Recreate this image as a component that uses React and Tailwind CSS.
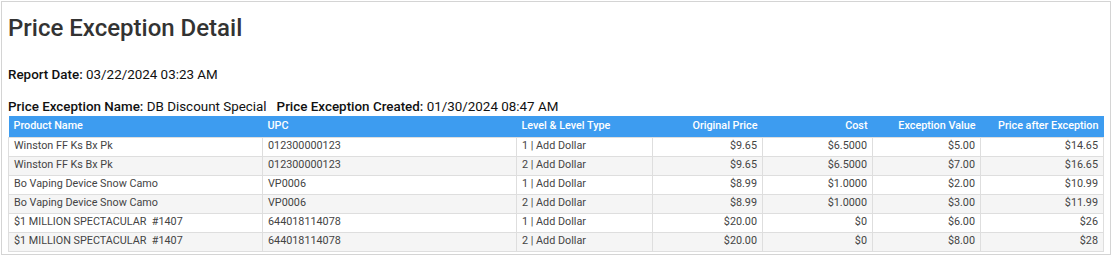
import React from 'react';

const rows = [
    ['Winston FF Ks Bx Pk', '012300000123', '1 | Add Dollar', '$9.65', '$6.5000', '$5.00', '$14.65'],
    ['Winston FF Ks Bx Pk', '012300000123', '2 | Add Dollar', '$9.65', '$6.5000', '$7.00', '$16.65'],
    ['Bo Vaping Device Snow Camo', 'VP0006', '1 | Add Dollar', '$8.99', '$1.0000', '$2.00', '$10.99'],
    ['Bo Vaping Device Snow Camo', 'VP0006', '2 | Add Dollar', '$8.99', '$1.0000', '$3.00', '$11.99'],
    ['$1 MILLION SPECTACULAR  #1407', '644018114078', '1 | Add Dollar', '$20.00', '$0', '$6.00', '$26'],
    ['$1 MILLION SPECTACULAR  #1407', '644018114078', '2 | Add Dollar', '$20.00', '$0', '$8.00', '$28'],
];

const cols = [
    { name: 'Product Name', w: 'w-[254px]', right: false },
    { name: 'UPC', w: 'w-[254px]', right: false },
    { name: 'Level & Level Type', w: 'w-[136px]', right: false },
    { name: 'Original Price', w: 'w-[110px]', right: true },
    { name: 'Cost', w: 'w-[110px]', right: true },
    { name: 'Exception Value', w: 'w-[108px]', right: true },
    { name: 'Price after Exception', w: 'w-[123px]', right: true },
];

function App() {
    return (
        <div className="w-[1112px] h-[258px] bg-white p-px font-['Roboto',sans-serif]">
            <div className="h-[254px] border border-[#d4d4d4] pl-[6px] pt-[11px]">
                <h1 className="text-[24px] leading-[30px] font-medium text-[#333]">Price Exception Detail</h1>
                <div className="mt-[24px] text-[13.4px] leading-[16px] text-[#111]">
                    <span className="font-medium">Report Date:</span> 03/22/2024 03:23 AM
                </div>
                <div className="mt-[16px] text-[13.4px] leading-[16px] text-[#111] whitespace-pre">
                    <span className="font-medium">Price Exception Name:</span> DB Discount Special   <span className="font-medium">Price Exception Created:</span> 01/30/2024 08:47 AM
                </div>
                <table className="mt-[1px] border-collapse text-[10.8px] w-[1095px] table-fixed">
                    <thead>
                        <tr className="bg-[#3d9cf0] h-[21px]">
                            {cols.map((c) => (
                                <th
                                    key={c.name}
                                    className={`${c.w} px-[5px] text-[10.8px] font-medium text-white ${c.right ? 'text-right' : 'text-left'}`}
                                >
                                    {c.name}
                                </th>
                            ))}
                        </tr>
                    </thead>
                    <tbody>
                        {rows.map((r, i) => (
                            <tr key={i} className={`h-[19px] ${i % 2 === 1 ? 'bg-[#f5f5f5]' : 'bg-white'}`}>
                                {r.map((v, j) => (
                                    <td
                                        key={j}
                                        className={`px-[5px] py-0 border border-[#dedede] text-[#444] whitespace-pre ${cols[j].right ? 'text-right' : 'text-left'}`}
                                    >
                                        {v}
                                    </td>
                                ))}
                            </tr>
                        ))}
                    </tbody>
                </table>
            </div>
        </div>
    );
}

export default App;
